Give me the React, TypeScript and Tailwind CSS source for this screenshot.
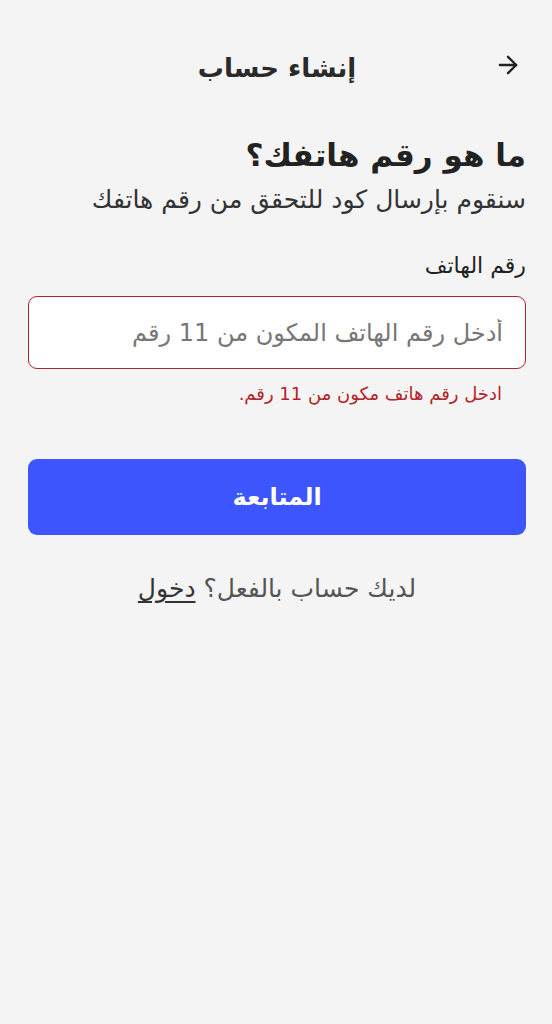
import { ArrowRight } from "lucide-react";

export default function App() {
  return (
    <div
      dir="rtl"
      className="min-h-screen w-full bg-[#f4f4f4] pl-[28px] pr-[26px] text-[#222]"
      style={{ fontFamily: '"DejaVu Sans", "Noto Sans", sans-serif' }}
    >
      {/* header */}
      <div className="relative flex h-[92px] items-center justify-center pt-[44px]">
        <button className="absolute right-[4px] top-[51px] text-[#222]">
          <ArrowRight className="h-[28px] w-[28px]" strokeWidth={2} />
        </button>
        <h1 className="text-[26px] font-bold leading-[48px] text-[#2a2a2a]">إنشاء حساب</h1>
      </div>

      <div className="mt-[43px]">
        <h2 className="text-[31px] font-bold leading-[40px] text-[#222]">ما هو رقم هاتفك؟</h2>
        <p className="mt-[9px] text-[25px] leading-[32px] text-[#333]">
          سنقوم بإرسال كود للتحقق من رقم هاتفك
        </p>
      </div>

      <label className="mt-[36px] block text-[22px] font-medium leading-[28px] text-[#222]">رقم الهاتف</label>

      <div className="mt-[16px] flex h-[73px] items-center rounded-[9px] border-[1.5px] border-[#b4232a] bg-white px-[22px]">
        <input
          type="tel"
          dir="rtl"
          placeholder="أدخل رقم الهاتف المكون من 11 رقم"
          className="w-full bg-transparent text-right text-[24px] text-[#333] outline-none placeholder:text-[#777]"
        />
      </div>
      <p className="mt-[13px] pr-[24px] text-[18px] leading-[24px] text-[#b4232a]">ادخل رقم هاتف مكون من 11 رقم.</p>

      <button className="mt-[53px] flex h-[76px] w-full items-center justify-center rounded-[9px] bg-[#3d55fc] text-[24px] font-bold text-white">
        المتابعة
      </button>

      <p className="mt-[38px] text-center text-[25px] leading-[32px] text-[#555]">
        لديك حساب بالفعل؟{" "}
        <a className="text-[#333] underline underline-offset-4">دخول</a>
      </p>
    </div>
  );
}
